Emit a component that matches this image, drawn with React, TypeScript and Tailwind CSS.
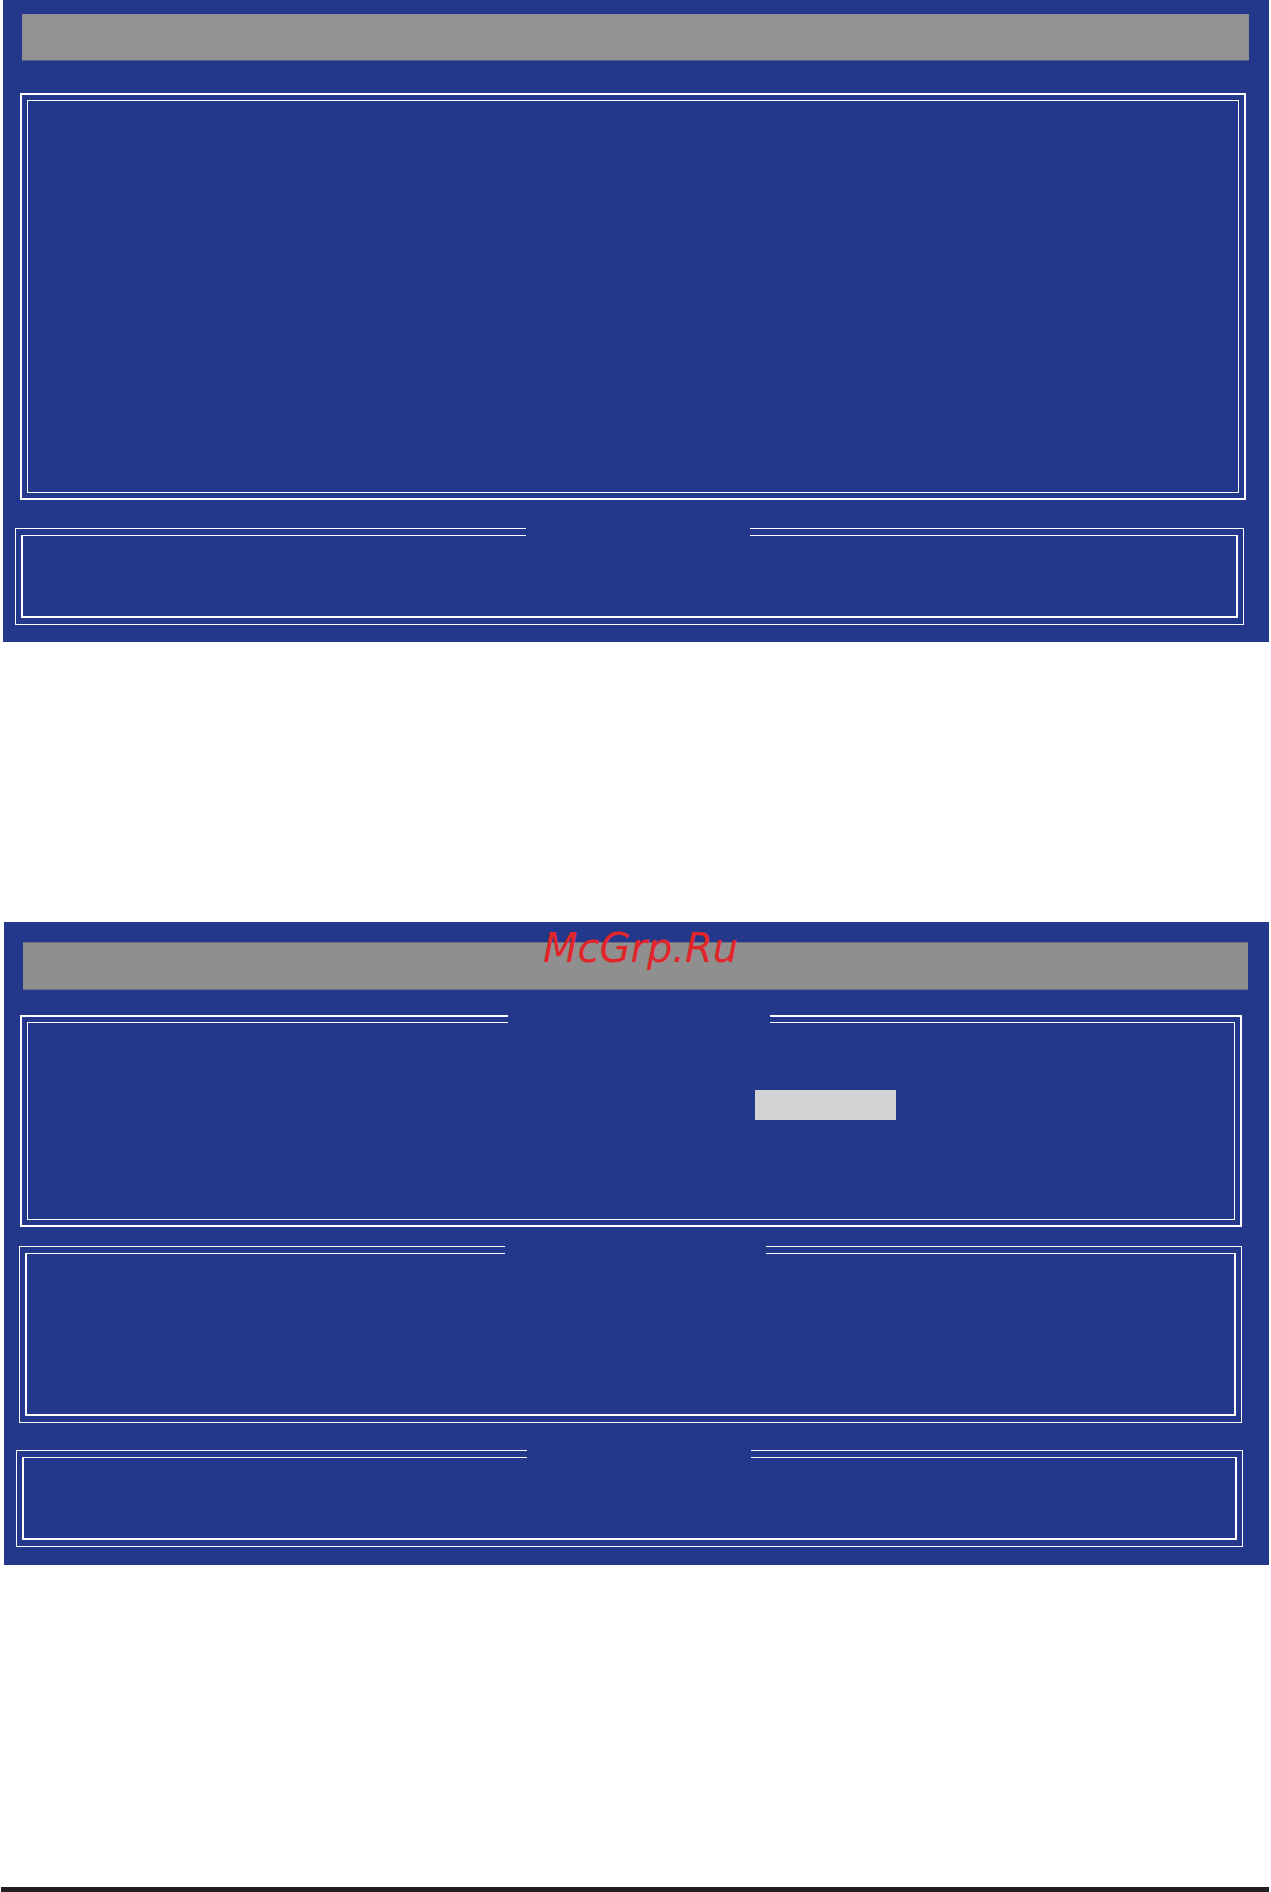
import React from 'react';

// BIOS-style setup screens: blue panels with grey title bars and double-line frames
const BLUE = 'bg-[#24388b]';

type FrameProps = {
  className: string;
  gapLeft?: number;
  gapWidth?: number;
  heavyOuter?: boolean;
  children?: React.ReactNode;
};

// Double-line box; an optional gap in the top lines leaves room for a caption
const Frame: React.FC<FrameProps> = ({ className, gapLeft, gapWidth, heavyOuter, children }) => {
  return (
    <div
      className={
        'relative border-white ' +
        (heavyOuter ? 'border-2 p-[5px] ' : 'border pt-[6px] px-[5px] pb-[6px] ') +
        className
      }
    >
      <div
        className={
          'h-full border-white ' + (heavyOuter ? 'border' : 'border-2 border-t')
        }
      >
        {children}
      </div>
      {gapLeft !== undefined && (
        <div
          className={'absolute top-[-2px] h-[11px] ' + BLUE}
          style={{ left: gapLeft, width: gapWidth }}
        />
      )}
    </div>
  );
};

const App: React.FC = () => {
  return (
    <div className="w-[1271px] h-[1892px] bg-white flex flex-col">
      {/* first screen */}
      <div className={'ml-[3px] w-[1266px] h-[642px] flex flex-col pt-[14px] ' + BLUE}>
        <div className="ml-[19px] w-[1227px] h-[47px] bg-[#939191] border-b border-[#5a5f86]" />
        <Frame heavyOuter className="mt-[32px] ml-[17px] w-[1226px] h-[407px]" />
        <Frame className="mt-[28px] ml-[12px] w-[1229px] h-[97px]" gapLeft={510} gapWidth={224} />
      </div>

      {/* second screen */}
      <div className={'relative mt-[280px] ml-[4px] w-[1265px] h-[643px] flex flex-col pt-[20px] ' + BLUE}>
        <div className="ml-[19px] w-[1225px] h-[48px] bg-[#908f8f] border-y border-[#6f7086]" />
        <Frame
          heavyOuter
          className="mt-[25px] ml-[16px] w-[1222px] h-[212px]"
          gapLeft={486}
          gapWidth={262}
        >
          <div className="mt-[67px] ml-[727px] w-[141px] h-[30px] bg-[#d3d3d3]" />
        </Frame>
        <Frame className="mt-[19px] ml-[15px] w-[1223px] h-[177px]" gapLeft={485} gapWidth={261} />
        <Frame className="mt-[27px] ml-[12px] w-[1227px] h-[97px]" gapLeft={510} gapWidth={224} />

        <span className="absolute top-[6px] left-[539px] text-[40px] leading-none italic text-[#e0262b] font-['DejaVu_Sans',sans-serif]">
          McGrp.Ru
        </span>
      </div>

      <div className="mt-auto ml-[1px] w-[1268px] h-[5px] bg-[#231f20]" />
    </div>
  );
};

export default App;
